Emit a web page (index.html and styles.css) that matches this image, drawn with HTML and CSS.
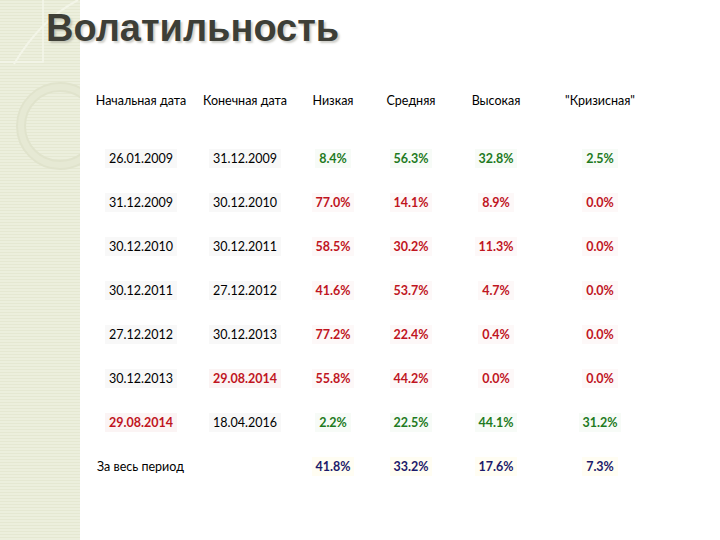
FILE: index.html
```html
<!DOCTYPE html>
<html lang="ru">
<head>
<meta charset="utf-8">
<title>Волатильность</title>
<link rel="stylesheet" href="styles.css">
</head>
<body>
<div class="slide">
  <svg class="deco" width="80" height="540" viewBox="0 0 80 540" aria-hidden="true">
    <path d="M0 62 H43 V0" fill="none" stroke="#f4f6ea" stroke-width="1.5"/>
    <path d="M14 64 Q40 20 78 0" fill="none" stroke="#f3f5e8" stroke-width="2"/>
    <circle cx="60" cy="126" r="39" fill="none" stroke="#e0e3cc" stroke-width="10"/>
    <circle cx="60" cy="126" r="39" fill="none" stroke="#e6e9d4" stroke-width="6"/>
  </svg>
  <h1 class="title">Волатильность</h1>
  <div class="table">
    <div class="th">Начальная дата</div>
    <div class="th">Конечная дата</div>
    <div class="th">Низкая</div>
    <div class="th">Средняя</div>
    <div class="th">Высокая</div>
    <div class="th">"Кризисная"</div>

    <div class="td"><span class="d">26.01.2009</span></div>
    <div class="td"><span class="d">31.12.2009</span></div>
    <div class="td"><span class="g">8.4%</span></div>
    <div class="td"><span class="g">56.3%</span></div>
    <div class="td"><span class="g">32.8%</span></div>
    <div class="td"><span class="g">2.5%</span></div>

    <div class="td"><span class="d">31.12.2009</span></div>
    <div class="td"><span class="d">30.12.2010</span></div>
    <div class="td"><span class="r">77.0%</span></div>
    <div class="td"><span class="r">14.1%</span></div>
    <div class="td"><span class="r">8.9%</span></div>
    <div class="td"><span class="r">0.0%</span></div>

    <div class="td"><span class="d">30.12.2010</span></div>
    <div class="td"><span class="d">30.12.2011</span></div>
    <div class="td"><span class="r">58.5%</span></div>
    <div class="td"><span class="r">30.2%</span></div>
    <div class="td"><span class="r">11.3%</span></div>
    <div class="td"><span class="r">0.0%</span></div>

    <div class="td"><span class="d">30.12.2011</span></div>
    <div class="td"><span class="d">27.12.2012</span></div>
    <div class="td"><span class="r">41.6%</span></div>
    <div class="td"><span class="r">53.7%</span></div>
    <div class="td"><span class="r">4.7%</span></div>
    <div class="td"><span class="r">0.0%</span></div>

    <div class="td"><span class="d">27.12.2012</span></div>
    <div class="td"><span class="d">30.12.2013</span></div>
    <div class="td"><span class="r">77.2%</span></div>
    <div class="td"><span class="r">22.4%</span></div>
    <div class="td"><span class="r">0.4%</span></div>
    <div class="td"><span class="r">0.0%</span></div>

    <div class="td"><span class="d">30.12.2013</span></div>
    <div class="td"><span class="d r">29.08.2014</span></div>
    <div class="td"><span class="r">55.8%</span></div>
    <div class="td"><span class="r">44.2%</span></div>
    <div class="td"><span class="r">0.0%</span></div>
    <div class="td"><span class="r">0.0%</span></div>

    <div class="td"><span class="d r">29.08.2014</span></div>
    <div class="td"><span class="d">18.04.2016</span></div>
    <div class="td"><span class="g">2.2%</span></div>
    <div class="td"><span class="g">22.5%</span></div>
    <div class="td"><span class="g">44.1%</span></div>
    <div class="td"><span class="g">31.2%</span></div>

    <div class="td left">За весь период</div>
    <div class="td"></div>
    <div class="td"><span class="b">41.8%</span></div>
    <div class="td"><span class="b">33.2%</span></div>
    <div class="td"><span class="b">17.6%</span></div>
    <div class="td"><span class="b">7.3%</span></div>
  </div>
</div>
</body>
</html>
```

FILE: styles.css
```css
html, body {
  margin: 0;
  padding: 0;
  background: #ffffff;
}

.slide {
  position: relative;
  width: 720px;
  height: 540px;
  overflow: hidden;
  background:
    repeating-linear-gradient(to bottom, #e5e8d2 0px, #e5e8d2 1px, #ecefdd 1px, #ecefdd 3px) left top / 80px 100% no-repeat,
    #ffffff;
  font-family: "Lato", "Liberation Sans", sans-serif;
  color: #000;
}

.deco {
  position: absolute;
  left: 0;
  top: 0;
}

.title {
  position: relative;
  margin: 0;
  padding: 7px 0 0 46px;
  height: 71px;
  font-family: "Liberation Sans", Arial, sans-serif;
  font-weight: bold;
  font-size: 38px;
  line-height: 42px;
  color: #3e3f37;
  text-shadow: 2px 2px 2px rgba(150, 150, 140, 0.45);
}

.table {
  position: relative;
  margin-left: 89px;
  display: grid;
  grid-template-columns: 104px 104px 72px 84px 86px 122px;
  grid-template-rows: 58px;
  grid-auto-rows: 44px;
  font-size: 12.5px;
}

.th {
  display: flex;
  align-items: center;
  justify-content: center;
  padding-bottom: 14px;
  white-space: nowrap;
  font-weight: 400;
  color: #000;
}

.td {
  display: flex;
  align-items: center;
  justify-content: center;
  white-space: nowrap;
}

.td.left {
  justify-content: flex-start;
  padding-left: 8px;
  font-weight: 400;
}

.d {
  background: #f8f8f8;
  padding: 2px 4px;
}

.g, .r, .b {
  font-weight: bold;
  padding: 2px 4px;
}

.g { color: #1e7a1e; background: #f7fbf7; }
.r { color: #c0141e; background: #fdf8f8; }
.b { color: #1c1a6a; background: #fffdf2; }
.d.r { background: #fbf4f4; }
```
